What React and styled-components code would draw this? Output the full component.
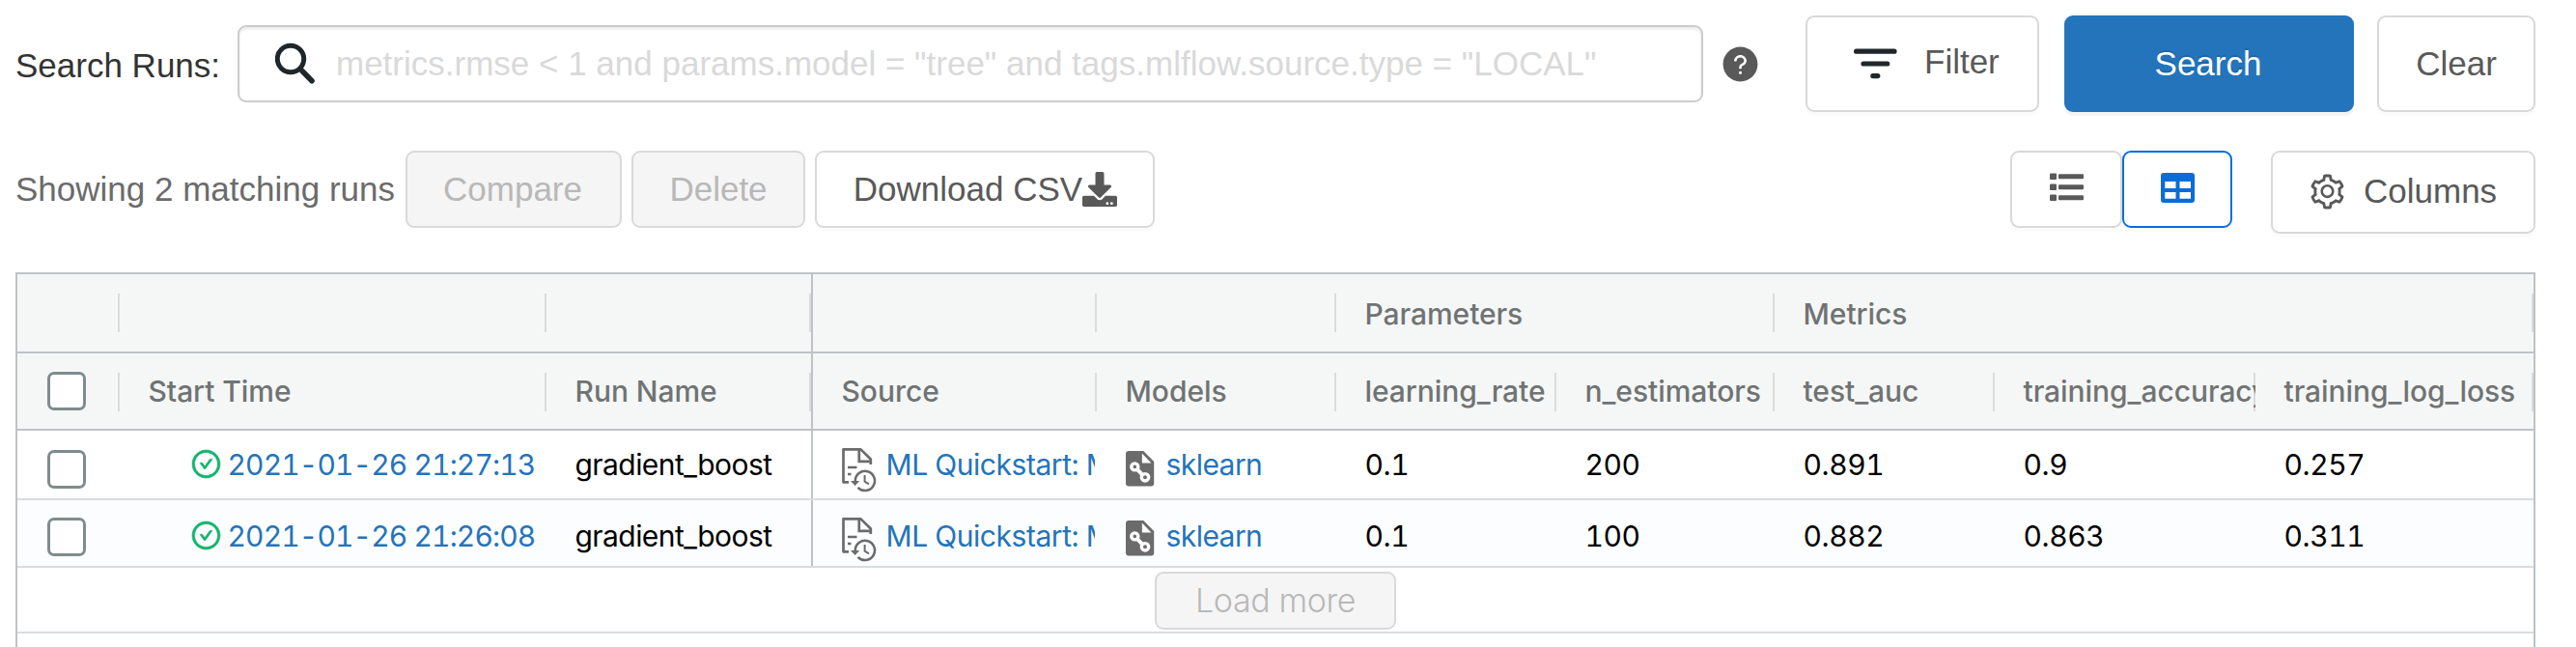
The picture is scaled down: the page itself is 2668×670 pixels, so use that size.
import React from 'react';
import styled, { createGlobalStyle, css } from 'styled-components';
import { AiFillQuestionCircle, AiOutlineCheckCircle, AiOutlineSetting } from 'react-icons/ai';
import { FaDownload } from 'react-icons/fa';

const GlobalStyle = createGlobalStyle`
  * { box-sizing: border-box; }
  body { margin: 0; background: #fff; overflow: hidden; }
  svg { display: block; flex: none; }
`;

const Page = styled.main`
  display: flex;
  flex-direction: column;
  height: 670px;
  padding: 16px 42px 0 16px;
  overflow: hidden;
  font: 400 35px/42px 'Liberation Sans', Arial, sans-serif;
  color: #333;
  white-space: nowrap;
`;

const SearchBar = styled.div`
  display: flex;
  align-items: center;
  height: 100px;
`;

const SearchLabel = styled.label`
  flex: none;
  width: 230px;
  padding-top: 4px;
`;

const SearchField = styled.div`
  display: flex;
  flex: none;
  align-items: center;
  gap: 19px;
  width: 1518px;
  height: 80px;
  padding-left: 37px;
  border: 2px solid #ccc;
  border-radius: 9px;
  box-shadow: inset 0 2px 3px rgba(0, 0, 0, 0.09);
`;

const Placeholder = styled.span`
  color: #d9d9d9;
`;

const HelpIcon = styled(AiFillQuestionCircle)`
  width: 41px;
  height: 41px;
  margin: 0 47px 0 18px;
  color: #595959;
`;

const Button = styled.button`
  display: flex;
  align-items: center;
  justify-content: center;
  flex: none;
  width: ${(p) => p.$width}px;
  height: ${(p) => p.$height || 80}px;
  padding: 0;
  border: 2px solid #d9d9d9;
  border-radius: 9px;
  background: #fff;
  box-shadow: 0 4px 0 rgba(0, 0, 0, 0.016);
  color: #595959;
  font: inherit;

  &:disabled {
    background: #f5f5f5;
    box-shadow: none;
    color: #b8b8b8;
  }
`;

const FilterButton = styled(Button)`
  justify-content: flex-start;
  gap: 28px;
  margin-right: 26px;
  padding-left: 48px;

  span { padding-bottom: 4px; }
`;

const PrimaryButton = styled(Button)`
  margin-right: 24px;
  padding-right: 2px;
  border-color: #2374bb;
  background: #2374bb;
  box-shadow: 0 4px 0 rgba(0, 0, 0, 0.045);
  color: #fff;
  text-shadow: 0 -2px 0 rgba(0, 0, 0, 0.12);
`;

const ActionBar = styled.div`
  display: flex;
  align-items: flex-start;
  gap: 10px;
  height: 86px;
  margin-top: 40px;
`;

const RunCount = styled.span`
  width: 394px;
  padding-top: 19px;
  color: #6b6b6b;
`;

const CompareButton = styled(Button)`
  padding-right: 2px;
`;

const DownloadButton = styled(Button)`
  padding-left: 1px;
`;

const ViewToggle = styled.div`
  display: flex;
  margin: 0 30px 0 auto;
`;

const ViewButton = styled(Button)`
  padding-bottom: 4px;
  ${(p) => p.$active && css`
    border-color: #096dd9;
    color: #096dd9;
  `}
`;

const ColumnsButton = styled(Button)`
  justify-content: flex-start;
  gap: 17px;
  padding-left: 36px;
  padding-bottom: 2px;
`;

const Table = styled.section`
  flex: 1;
  margin-top: 40px;
  border: 2px solid #bdc3c7;
  border-bottom: 0;
  font: 400 30px/40px Inter, sans-serif;
  color: #000;
`;

const Row = styled.div`
  display: grid;
  grid-template-columns: 106px 442px 276px 294px 248px 228px 226px 228px 270px 288px;
  height: ${(p) => p.$height}px;
  border-bottom: 2px solid ${(p) => (p.$head ? '#bdc3c7' : '#d9dcde')};
  background: ${(p) => (p.$head ? '#f5f7f7' : p.$striped ? '#fcfdfe' : '#fff')};
`;

const HeaderCell = styled.div`
  display: flex;
  align-items: center;
  grid-column: span ${(p) => p.$span || 1};
  padding-top: ${(p) => (p.$span ? 2 : 0)}px;
  padding-left: 29.5px;
  overflow: hidden;
  border-right: ${(p) => (p.$pinnedEdge ? '2px solid #bdc3c7' : '0')};
  background: linear-gradient(#d9dcde, #d9dcde) no-repeat right 0 top 20px / 2px 40px;
  color: #707373;
  font-weight: 500;
  letter-spacing: -0.05px;
`;

const Cell = styled.div`
  display: flex;
  align-items: flex-start;
  margin-right: ${(p) => (p.$pinnedEdge ? 0 : 2)}px;
  padding: ${(p) => p.$top}px 0 0 29.5px;
  overflow: hidden;
  border-right: ${(p) => (p.$pinnedEdge ? '2px solid #bdc3c7' : '0')};
  letter-spacing: ${(p) => (p.$numeric ? -0.4 : -0.57)}px;
  font-variant-numeric: tabular-nums;
`;

const Checkbox = styled.span`
  width: 40px;
  height: 40px;
  margin-left: 1px;
  border: 3px solid #7f8c8d;
  border-radius: 7px;
  background: #fff;
`;

const StatusIcon = styled(AiOutlineCheckCircle)`
  width: 33px;
  height: 33px;
  margin: 3px 6px 0 43px;
  color: #12b46c;
  stroke-width: 22px;
`;

const IconSlot = styled.span`
  flex: none;
  width: ${(p) => p.$width}px;
  padding-top: ${(p) => p.$top}px;
`;

const Link = styled.a`
  color: #2374bb;
  letter-spacing: ${(p) => p.$spacing ?? -0.45}px;
`;

const LoadMoreRow = styled.div`
  display: flex;
  justify-content: center;
  height: 68px;
  padding-top: 4px;
  border-bottom: 2px solid #d9dcde;
`;

const LoadMoreButton = styled(Button)`
  font: 350 34px/40px Inter, sans-serif;
  letter-spacing: -0.4px;
`;

const SearchIcon = () => (
  <svg width="44" height="46" viewBox="0 0 44 46" fill="none" stroke="#1f272b">
    <circle cx="16" cy="18" r="13.7" strokeWidth="5" />
    <path d="M28 30.5 38 40.7" strokeWidth="5.6" strokeLinecap="round" />
  </svg>
);

const FilterIcon = () => (
  <svg width="45" height="32" viewBox="0 0 45 32" stroke="#1f272b" strokeWidth="5.2" strokeLinecap="round">
    <path d="M2.6 3.2H42M10 16H34.7M19.8 28.6H24.8" />
  </svg>
);

const ListIcon = () => (
  <svg width="35" height="30" viewBox="0 0 35 30" fill="currentColor">
    {[0, 11, 22].map((y) => (
      <g key={y}>
        <rect y={y + 0.5} width="7" height="6.5" rx="1" />
        <rect x="9" y={y + 1.2} width="26" height="5" rx="1" />
      </g>
    ))}
  </svg>
);

const TableIcon = () => (
  <svg width="35" height="31" viewBox="0 0 35 31" fill="currentColor" fillRule="evenodd">
    <path d="M3 0H32a3 3 0 0 1 3 3V28a3 3 0 0 1-3 3H3a3 3 0 0 1-3-3V3a3 3 0 0 1 3-3ZM4.3 9v7H15.5V9ZM19.5 9v7H31V9ZM4.3 20v6.7H15.5V20ZM19.5 20v6.7H31V20Z" />
  </svg>
);

const NotebookRevisionIcon = () => (
  <svg width="36" height="47" viewBox="0 0 36 47" fill="none" stroke="#6b6b6b" strokeWidth="2.7">
    <path d="M7 36.3H1.5V2.4H19.5L29.8 12.5V18" strokeLinejoin="round" />
    <path d="M17.8 2.4V14.8H30.5M6 21H15.5M6 28H9.5" />
    <path d="M13.8 35.5V34.7A10.1 10.1 0 1 1 16.5 41.8" strokeWidth="2.5" />
    <path d="M9 35H18.2L13.6 40Z" fill="#6b6b6b" stroke="none" />
    <path d="M23.6 29V35.6L28 38.3" strokeWidth="2" />
  </svg>
);

const ModelIcon = () => (
  <svg width="30" height="37" viewBox="0 0 30 37">
    <path d="M3 0H18.3L29.2 11V33.4a3 3 0 0 1-3 3H3a3 3 0 0 1-3-3V3a3 3 0 0 1 3-3Z" fill="#6b6b6b" />
    <path d="M16.8 2.6V12.4H26.4Z" fill="#fff" />
    <path d="M9.3 16.6 20 27.3" stroke="#fff" strokeWidth="4" />
    <circle cx="9.3" cy="16.4" r="3.5" fill="#6b6b6b" stroke="#fff" strokeWidth="3.4" />
    <circle cx="20" cy="27.3" r="3.7" fill="#6b6b6b" stroke="#fff" strokeWidth="3.4" />
  </svg>
);

const COLUMNS = ['Start Time', 'Run Name', 'Source', 'Models', 'learning_rate', 'n_estimators', 'test_auc', 'training_accuracy', 'training_log_loss'];

const RUNS = [
  { time: '2021-01-26 21:27:13', values: ['0.1', '200', '0.891', '0.9', '0.257'], height: 72, top: 15, box: 20, icon: 2 },
  { time: '2021-01-26 21:26:08', values: ['0.1', '100', '0.882', '0.863', '0.311'], height: 70, top: 17, box: 18, icon: 0 },
];

const RunRow = ({ run, striped }) => (
  <Row $height={run.height} $striped={striped}>
    <Cell $top={run.box}><Checkbox /></Cell>
    <Cell $top={run.top}><StatusIcon /><Link $spacing={-0.87}>{run.time}</Link></Cell>
    <Cell $top={run.top} $pinnedEdge>gradient_boost</Cell>
    <Cell $top={run.top}>
      <IconSlot $width={46} $top={run.icon}><NotebookRevisionIcon /></IconSlot>
      <Link>ML Quickstart: M</Link>
    </Cell>
    <Cell $top={run.top}>
      <IconSlot $width={42} $top={run.icon + 4}><ModelIcon /></IconSlot>
      <Link $spacing={-0.56}>sklearn</Link>
    </Cell>
    {run.values.map((v, i) => <Cell key={i} $top={run.top} $numeric>{v}</Cell>)}
  </Row>
);

export default function App() {
  return (
    <Page>
      <GlobalStyle />
      <SearchBar>
        <SearchLabel>Search Runs:</SearchLabel>
        <SearchField>
          <SearchIcon />
          <Placeholder>metrics.rmse &lt; 1 and params.model = "tree" and tags.mlflow.source.type = "LOCAL"</Placeholder>
        </SearchField>
        <HelpIcon />
        <FilterButton $width={242} $height={100}><FilterIcon /><span>Filter</span></FilterButton>
        <PrimaryButton $width={300} $height={100}>Search</PrimaryButton>
        <Button $width={164} $height={100}>Clear</Button>
      </SearchBar>
      <ActionBar>
        <RunCount>Showing 2 matching runs</RunCount>
        <CompareButton $width={224} disabled>Compare</CompareButton>
        <Button $width={180} disabled>Delete</Button>
        <DownloadButton $width={352}>Download CSV<FaDownload size={36} /></DownloadButton>
        <ViewToggle>
          <ViewButton $width={116}><ListIcon /></ViewButton>
          <ViewButton $width={114} $active><TableIcon /></ViewButton>
        </ViewToggle>
        <ColumnsButton $width={274} $height={86}><AiOutlineSetting size={41} />Columns</ColumnsButton>
      </ActionBar>
      <Table>
        <Row $head $height={82}>
          <HeaderCell />
          <HeaderCell />
          <HeaderCell $pinnedEdge />
          <HeaderCell />
          <HeaderCell />
          <HeaderCell $span={2}>Parameters</HeaderCell>
          <HeaderCell $span={3}>Metrics</HeaderCell>
        </Row>
        <Row $head $height={80}>
          <HeaderCell><Checkbox /></HeaderCell>
          {COLUMNS.map((c) => <HeaderCell key={c} $pinnedEdge={c === 'Run Name'}>{c}</HeaderCell>)}
        </Row>
        {RUNS.map((r, i) => <RunRow key={r.time} run={r} striped={i % 2 === 1} />)}
        <LoadMoreRow>
          <LoadMoreButton $width={250} $height={60} disabled>Load more</LoadMoreButton>
        </LoadMoreRow>
      </Table>
    </Page>
  );
}
